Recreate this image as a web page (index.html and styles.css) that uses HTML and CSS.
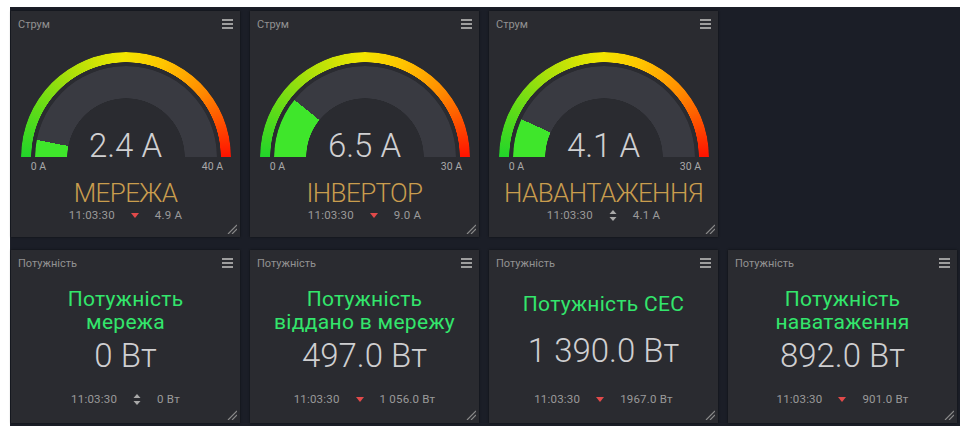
FILE: index.html
```html
<!DOCTYPE html>
<html lang="uk">
<head>
<meta charset="utf-8">
<title>Енергомоніторинг</title>
<link rel="stylesheet" href="styles.css">
</head>
<body>
<main class="dash">

  <section class="card gauge-card">
    <header class="card-head"><span>Струм</span><span class="menu"><i></i><i></i><i></i></span></header>
    <div class="gauge" style="--v: 10.8deg">
      <div class="ring"></div>
      <div class="track"></div>
      <div class="reading">2.4 A</div>
    </div>
    <div class="scale"><span>0 A</span><span>40 A</span></div>
    <div class="gauge-title">МЕРЕЖА</div>
    <div class="stamp">
      <span>11:03:30</span>
      <svg class="trend" width="8" height="5" viewBox="0 0 8 5"><path d="M0 0h8L4 5z" fill="#e24a4a"/></svg>
      <span>4.9 A</span>
    </div>
    <svg class="grip" width="10" height="10" viewBox="0 0 10 10"><path d="M10 1L1 10M10 5L5 10" stroke="#8a8a8a" stroke-width="1.2"/></svg>
  </section>

  <section class="card gauge-card">
    <header class="card-head"><span>Струм</span><span class="menu"><i></i><i></i><i></i></span></header>
    <div class="gauge" style="--v: 39deg">
      <div class="ring"></div>
      <div class="track"></div>
      <div class="reading">6.5 A</div>
    </div>
    <div class="scale"><span>0 A</span><span>30 A</span></div>
    <div class="gauge-title">ІНВЕРТОР</div>
    <div class="stamp">
      <span>11:03:30</span>
      <svg class="trend" width="8" height="5" viewBox="0 0 8 5"><path d="M0 0h8L4 5z" fill="#e24a4a"/></svg>
      <span>9.0 A</span>
    </div>
    <svg class="grip" width="10" height="10" viewBox="0 0 10 10"><path d="M10 1L1 10M10 5L5 10" stroke="#8a8a8a" stroke-width="1.2"/></svg>
  </section>

  <section class="card gauge-card">
    <header class="card-head"><span>Струм</span><span class="menu"><i></i><i></i><i></i></span></header>
    <div class="gauge" style="--v: 24.6deg">
      <div class="ring"></div>
      <div class="track"></div>
      <div class="reading">4.1 A</div>
    </div>
    <div class="scale"><span>0 A</span><span>30 A</span></div>
    <div class="gauge-title">НАВАНТАЖЕННЯ</div>
    <div class="stamp">
      <span>11:03:30</span>
      <svg class="trend" width="8" height="11" viewBox="0 0 8 11"><path d="M4 0l3.5 4h-7zM4 11l3.5-4h-7z" fill="#a9a9a9"/></svg>
      <span>4.1 A</span>
    </div>
    <svg class="grip" width="10" height="10" viewBox="0 0 10 10"><path d="M10 1L1 10M10 5L5 10" stroke="#8a8a8a" stroke-width="1.2"/></svg>
  </section>

  <section class="card text-card">
    <header class="card-head"><span>Потужність</span><span class="menu"><i></i><i></i><i></i></span></header>
    <div class="text-title">Потужність<br>мережа</div>
    <div class="text-value">0 Вт</div>
    <div class="stamp">
      <span>11:03:30</span>
      <svg class="trend" width="8" height="11" viewBox="0 0 8 11"><path d="M4 0l3.5 4h-7zM4 11l3.5-4h-7z" fill="#a9a9a9"/></svg>
      <span>0 Вт</span>
    </div>
    <svg class="grip" width="10" height="10" viewBox="0 0 10 10"><path d="M10 1L1 10M10 5L5 10" stroke="#8a8a8a" stroke-width="1.2"/></svg>
  </section>

  <section class="card text-card">
    <header class="card-head"><span>Потужність</span><span class="menu"><i></i><i></i><i></i></span></header>
    <div class="text-title">Потужність<br>віддано в мережу</div>
    <div class="text-value">497.0 Вт</div>
    <div class="stamp">
      <span>11:03:30</span>
      <svg class="trend" width="8" height="5" viewBox="0 0 8 5"><path d="M0 0h8L4 5z" fill="#e24a4a"/></svg>
      <span>1 056.0 Вт</span>
    </div>
    <svg class="grip" width="10" height="10" viewBox="0 0 10 10"><path d="M10 1L1 10M10 5L5 10" stroke="#8a8a8a" stroke-width="1.2"/></svg>
  </section>

  <section class="card text-card">
    <header class="card-head"><span>Потужність</span><span class="menu"><i></i><i></i><i></i></span></header>
    <div class="text-title single">Потужність СЕС</div>
    <div class="text-value">1 390.0 Вт</div>
    <div class="stamp">
      <span>11:03:30</span>
      <svg class="trend" width="8" height="5" viewBox="0 0 8 5"><path d="M0 0h8L4 5z" fill="#e24a4a"/></svg>
      <span>1967.0 Вт</span>
    </div>
    <svg class="grip" width="10" height="10" viewBox="0 0 10 10"><path d="M10 1L1 10M10 5L5 10" stroke="#8a8a8a" stroke-width="1.2"/></svg>
  </section>

  <section class="card text-card">
    <header class="card-head"><span>Потужність</span><span class="menu"><i></i><i></i><i></i></span></header>
    <div class="text-title">Потужність<br>наватаження</div>
    <div class="text-value">892.0 Вт</div>
    <div class="stamp">
      <span>11:03:30</span>
      <svg class="trend" width="8" height="5" viewBox="0 0 8 5"><path d="M0 0h8L4 5z" fill="#e24a4a"/></svg>
      <span>901.0 Вт</span>
    </div>
    <svg class="grip" width="10" height="10" viewBox="0 0 10 10"><path d="M10 1L1 10M10 5L5 10" stroke="#8a8a8a" stroke-width="1.2"/></svg>
  </section>

</main>
</body>
</html>
```

FILE: styles.css
```css
* { box-sizing: border-box; }

html, body {
  margin: 0;
  height: 100%;
}

body {
  background: #ffffff;
  font-family: Roboto, "Noto Sans", sans-serif;
  overflow: hidden;
}

/* dashboard canvas with a 4-column widget grid */
.dash {
  margin: 7px 0 0 10px;
  height: 419px;
  background: #1b1e27;
  padding: 4px 0 0 1px;
  display: grid;
  grid-template-columns: repeat(4, 229px);
  grid-template-rows: 226px 173px;
  column-gap: 10px;
  row-gap: 13px;
}

.card {
  position: relative;
  background: #2a2b30;
  box-shadow: 0 0 2px rgba(0, 0, 0, 0.6);
  display: flex;
  flex-direction: column;
  align-items: center;
}
.gauge-card { padding-bottom: 15px; }
.text-card { grid-row: 2; padding-bottom: 17px; }

.card-head {
  align-self: stretch;
  height: 26px;
  flex: none;
  padding: 0 7px;
  display: flex;
  align-items: center;
  justify-content: space-between;
  font-size: 11px;
  color: #929292;
}

.menu {
  width: 11px;
  display: flex;
  flex-direction: column;
  gap: 2px;
}
.menu i {
  display: block;
  height: 2px;
  background: #9e9e9e;
}

/* half-circle gauge: coloured outer band + value track;
   the lower half of each disc is transparent */
.gauge {
  width: 210px;
  height: 105px;
  flex: none;
  margin-top: 15px;
  display: grid;
  grid-template-rows: 105px;
}
.gauge > * { grid-area: 1 / 1; }

.ring {
  width: 210px;
  height: 210px;
  border-radius: 50%;
  background: conic-gradient(from 270deg,
    #22d52a 0deg, #5fdc18 28deg, #a8e00a 55deg, #f2e600 88deg,
    #ffc400 112deg, #ff8a00 140deg, #ff4a00 162deg, #ff1200 180deg,
    transparent 180deg);
  -webkit-mask: radial-gradient(circle, transparent 94.5px, #000 95px);
          mask: radial-gradient(circle, transparent 94.5px, #000 95px);
}

.track {
  justify-self: center;
  margin-top: 14px;
  width: 182px;
  height: 182px;
  border-radius: 50%;
  background: conic-gradient(from 270deg,
    #3fe62b 0deg, #3fe62b var(--v),
    #393a41 var(--v), #393a41 180deg, transparent 180deg);
  -webkit-mask: radial-gradient(circle, transparent 58.5px, #000 59px);
          mask: radial-gradient(circle, transparent 58.5px, #000 59px);
}

.reading {
  align-self: end;
  justify-self: center;
  margin-bottom: -5px;
  font-size: 33px;
  line-height: 33px;
  font-weight: 300;
  color: #d0d0d2;
  white-space: nowrap;
}

.scale {
  width: 210px;
  margin-top: 4px;
  display: flex;
  justify-content: space-between;
  font-size: 10.5px;
  line-height: 12px;
  color: #a8a8a8;
}
.scale span {
  width: 36px;
  text-align: center;
}

.gauge-title {
  margin-top: 6px;
  font-size: 26px;
  line-height: 28px;
  font-weight: 300;
  letter-spacing: -0.6px;
  color: #c99d4e;
  white-space: nowrap;
}

.stamp {
  margin-top: auto;
  height: 14px;
  display: flex;
  align-items: center;
  gap: 16px;
  font-size: 11.5px;
  line-height: 14px;
  letter-spacing: 0.2px;
  color: #9a9a9a;
  white-space: nowrap;
}

.trend { display: block; }

.text-title {
  margin-top: 12px;
  text-align: center;
  font-size: 21px;
  line-height: 23px;
  letter-spacing: 0.3px;
  color: #33e66c;
}
.text-title.single { margin-top: 17px; }

.text-value {
  margin-top: 2px;
  font-size: 33px;
  line-height: 40px;
  font-weight: 300;
  color: #cfcfd1;
  white-space: nowrap;
}
.text-title.single + .text-value { margin-top: 15px; }

/* resize handle in the card's corner */
.grip {
  position: absolute;
  right: 3px;
  bottom: 3px;
}
```
